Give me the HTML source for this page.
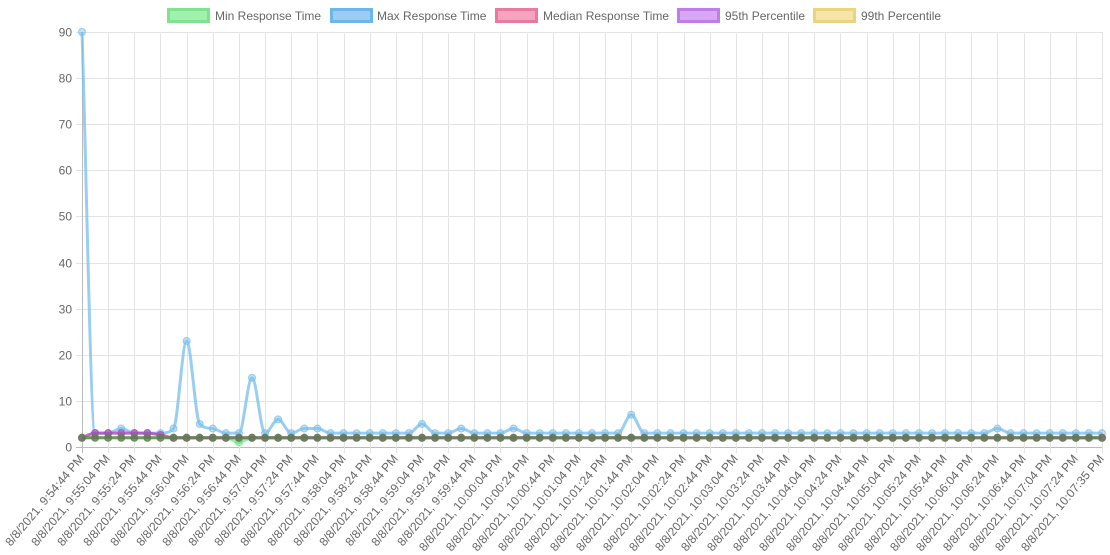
<!DOCTYPE html>
<html><head><meta charset="utf-8"><style>
html,body{margin:0;padding:0;background:#fff;width:1110px;height:555px;overflow:hidden}
svg{display:block;font-family:"Liberation Sans",sans-serif}
</style></head><body>
<svg id="c" width="1110" height="555" xmlns="http://www.w3.org/2000/svg">
<g font-size="12" fill="#666">
<rect x="168.5" y="9.5" width="40" height="12" fill="rgba(100,230,120,0.6)" stroke="#7ee28e" stroke-width="3"/>
<text x="215" y="20">Min Response Time</text>
<rect x="331.5" y="9.5" width="40" height="12" fill="rgba(90,170,240,0.6)" stroke="#6cb6ea" stroke-width="3"/>
<text x="377" y="20">Max Response Time</text>
<rect x="496.5" y="9.5" width="40" height="12" fill="rgba(240,100,150,0.6)" stroke="#e87aa0" stroke-width="3"/>
<text x="543" y="20">Median Response Time</text>
<rect x="678.5" y="9.5" width="40" height="12" fill="rgba(190,110,240,0.6)" stroke="#c07ce8" stroke-width="3"/>
<text x="725" y="20">95th Percentile</text>
<rect x="814.5" y="9.5" width="40" height="12" fill="rgba(240,210,110,0.6)" stroke="#ecd37e" stroke-width="3"/>
<text x="861" y="20">99th Percentile</text>
</g>
<g id="grid"></g><g id="lines"></g>
</svg>
<script>
var ns="http://www.w3.org/2000/svg",g=document.getElementById("grid"),L=document.getElementById("lines");
function el(p,t,a,tx){var e=document.createElementNS(ns,t);for(var k in a)e.setAttribute(k,a[k]);if(tx!=null)e.textContent=tx;p.appendChild(e);return e}
var x0=82,x1=1102,y0=447,y90=32,N=79,dx=(x1-x0)/(N-1);
function Y(v){return y0-(v/90)*(y0-y90)}
for(var v=0;v<=90;v+=10){var y=Math.round(Y(v))+.5;el(g,"line",{x1:x0-6,x2:x1,y1:y,y2:y,stroke:v==0?"#bbb":"#e3e3e3","stroke-width":1});
el(g,"text",{x:72,y:y+4,"text-anchor":"end","font-size":12,fill:"#666"},v)}
var base=54*60+44;
for(var i=0;i<N;i+=2){var x=Math.round(x0+i*dx)+.5;el(g,"line",{x1:x,x2:x,y1:y90,y2:y0+6,stroke:i==0?"#bbb":"#e3e3e3"});
var s=base+i*10;if(i==78)s=base+771;var h=9+Math.floor(s/3600),m=Math.floor(s%3600/60),sec=s%60;
var lab="8/8/2021, "+h+":"+(m<10?"0":"")+m+":"+(sec<10?"0":"")+sec+" PM";
el(g,"text",{x:x+2,y:y0+12,"text-anchor":"end","font-size":12,fill:"#666",transform:"rotate(-50 "+(x+2)+" "+(y0+12)+")"},lab)}
function arr(d,o){var a=[];for(var i=0;i<N;i++)a.push(o[i]!=null?o[i]:d);return a}
var mx=arr(3,{0:90,3:4,7:4,8:23,9:5,10:4,13:15,15:6,17:4,18:4,26:5,29:4,33:4,42:7,70:4});
var mn=arr(2,{12:1});
var md=arr(2,{1:3,2:3,3:3,4:3,5:3,6:2.6});
var p95=arr(2,{1:3,2:3,3:3,4:3,5:3,6:2.6});
var p99=arr(2,{});
function path(d){var n=d.length,P=d.map(function(v,i){return[x0+i*dx,Y(v)]}),del=[],m=[];
for(var i=0;i<n-1;i++)del.push((P[i+1][1]-P[i][1])/dx);
for(var i=0;i<n;i++){if(i==0)m.push(del[0]);else if(i==n-1)m.push(del[n-2]);else if(del[i-1]*del[i]<=0)m.push(0);else m.push((del[i-1]+del[i])/2)}
for(var i=0;i<n-1;i++){if(del[i]==0){m[i]=0;m[i+1]=0;continue}var a=m[i]/del[i],b=m[i+1]/del[i],t=a*a+b*b;if(t>9){var k=3/Math.sqrt(t);m[i]=k*a*del[i];m[i+1]=k*b*del[i]}}
var s="M"+P[0][0]+" "+P[0][1],h=dx/3;
for(var i=0;i<n-1;i++)s+=" C"+(P[i][0]+h)+" "+(P[i][1]+m[i]*h)+" "+(P[i+1][0]-h)+" "+(P[i+1][1]-m[i+1]*h)+" "+P[i+1][0]+" "+P[i+1][1];return s}
var sets=[[mn,"rgba(110,230,130,0.7)","rgba(100,220,120,0.5)"],[mx,"rgba(120,190,235,0.75)","rgba(120,190,235,0.45)"],[md,"rgba(220,80,140,0.6)","rgba(220,80,140,0.4)"],[p95,"rgba(150,80,200,0.55)","rgba(150,80,200,0.4)"],[p99,"rgba(100,130,80,0.8)","rgba(95,120,80,0.7)"]];
sets.forEach(function(S){el(L,"path",{d:path(S[0]),fill:"none",stroke:S[1],"stroke-width":3});
S[0].forEach(function(v,i){el(L,"circle",{cx:x0+i*dx,cy:Y(v),r:3.5,fill:S[2],stroke:S[1],"stroke-width":1})})});
</script>
</body></html>
